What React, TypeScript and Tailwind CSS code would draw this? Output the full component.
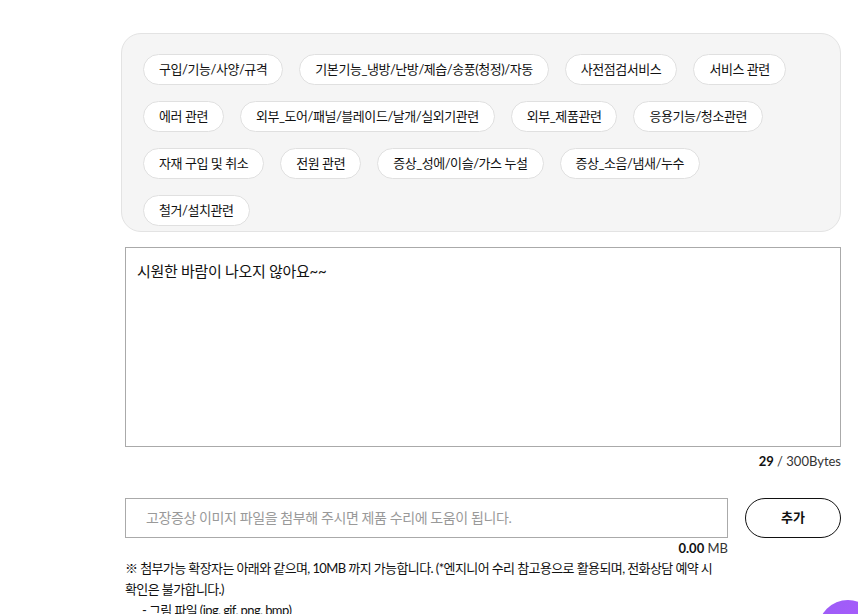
const chips = [
  "구입/기능/사양/규격",
  "기본기능_냉방/난방/제습/송풍(청정)/자동",
  "사전점검서비스",
  "서비스 관련",
  "에러 관련",
  "외부_도어/패널/블레이드/날개/실외기관련",
  "외부_제품관련",
  "응용기능/청소관련",
  "자재 구입 및 취소",
  "전원 관련",
  "증상_성에/이슬/가스 누설",
  "증상_소음/냄새/누수",
  "철거/설치관련",
];

export default function App() {
  return (
    <div className="relative min-h-[614px] overflow-hidden bg-white font-['Lato','Noto_Sans_CJK_KR',sans-serif] text-[#111]">
      <div className="ml-[121px] w-[720px] pt-[33px]">
        {/* symptom chips */}
        <div className="flex flex-wrap gap-x-[16px] gap-y-[16px] rounded-[20px] border border-[#e3e3e3] bg-[#f5f5f5] px-[21px] pt-[20px] pb-[5px]">
          {chips.map((c) => (
            <button
              key={c}
              className="flex h-[31px] items-center rounded-full border border-[#e0e0e0] bg-white px-[15px] text-[13px] tracking-[-0.45px] text-[#111]"
            >
              {c}
            </button>
          ))}
        </div>

        {/* description */}
        <div className="mt-[15px] ml-[4px]">
          <textarea
            className="block h-[200px] w-[716px] resize-none border border-[#aaa] px-[11px] py-[12px] text-[15px] leading-[22px] tracking-[-0.3px] text-[#111] outline-none"
            defaultValue="시원한 바람이 나오지 않아요~~"
          />
          <div className="mt-[5px] text-right text-[13px] text-[#333]">
            <span className="font-bold text-[#111]">29</span> / 300Bytes
          </div>
        </div>

        {/* attach */}
        <div className="mt-[26px] ml-[4px] flex gap-[17px]">
          <div className="w-[603px]">
            <div className="flex h-[40px] items-center border border-[#aaa] px-[20px] text-[14px] tracking-[-0.4px] text-[#999]">
              고장증상 이미지 파일을 첨부해 주시면 제품 수리에 도움이 됩니다.
            </div>
            <div className="mt-[1px] text-right text-[13px] text-[#333]">
              <span className="font-bold text-[#111]">0.00</span> MB
            </div>
          </div>
          <button className="h-[40px] w-[96px] rounded-full border border-[#111] bg-white text-[13px] font-bold text-[#111]">
            추가
          </button>
        </div>

        <div className="ml-[4px] w-[600px] text-[13px] leading-[21px] tracking-[-0.6px] text-[#111]">
          <p>
            ※ 첨부가능 확장자는 아래와 같으며, 10MB 까지 가능합니다. (*엔지니어 수리 참고용으로 활용되며, 전화상담 예약 시
            확인은 불가합니다.)
          </p>
          <p className="pl-[17px]">- 그림 파일 (jpg, gif, png, bmp)</p>
        </div>
      </div>

      <div className="absolute left-[818px] top-[600px] h-[60px] w-[60px] rounded-full bg-gradient-to-br from-[#9b5cf6] to-[#b15cff]" />
    </div>
  );
}
